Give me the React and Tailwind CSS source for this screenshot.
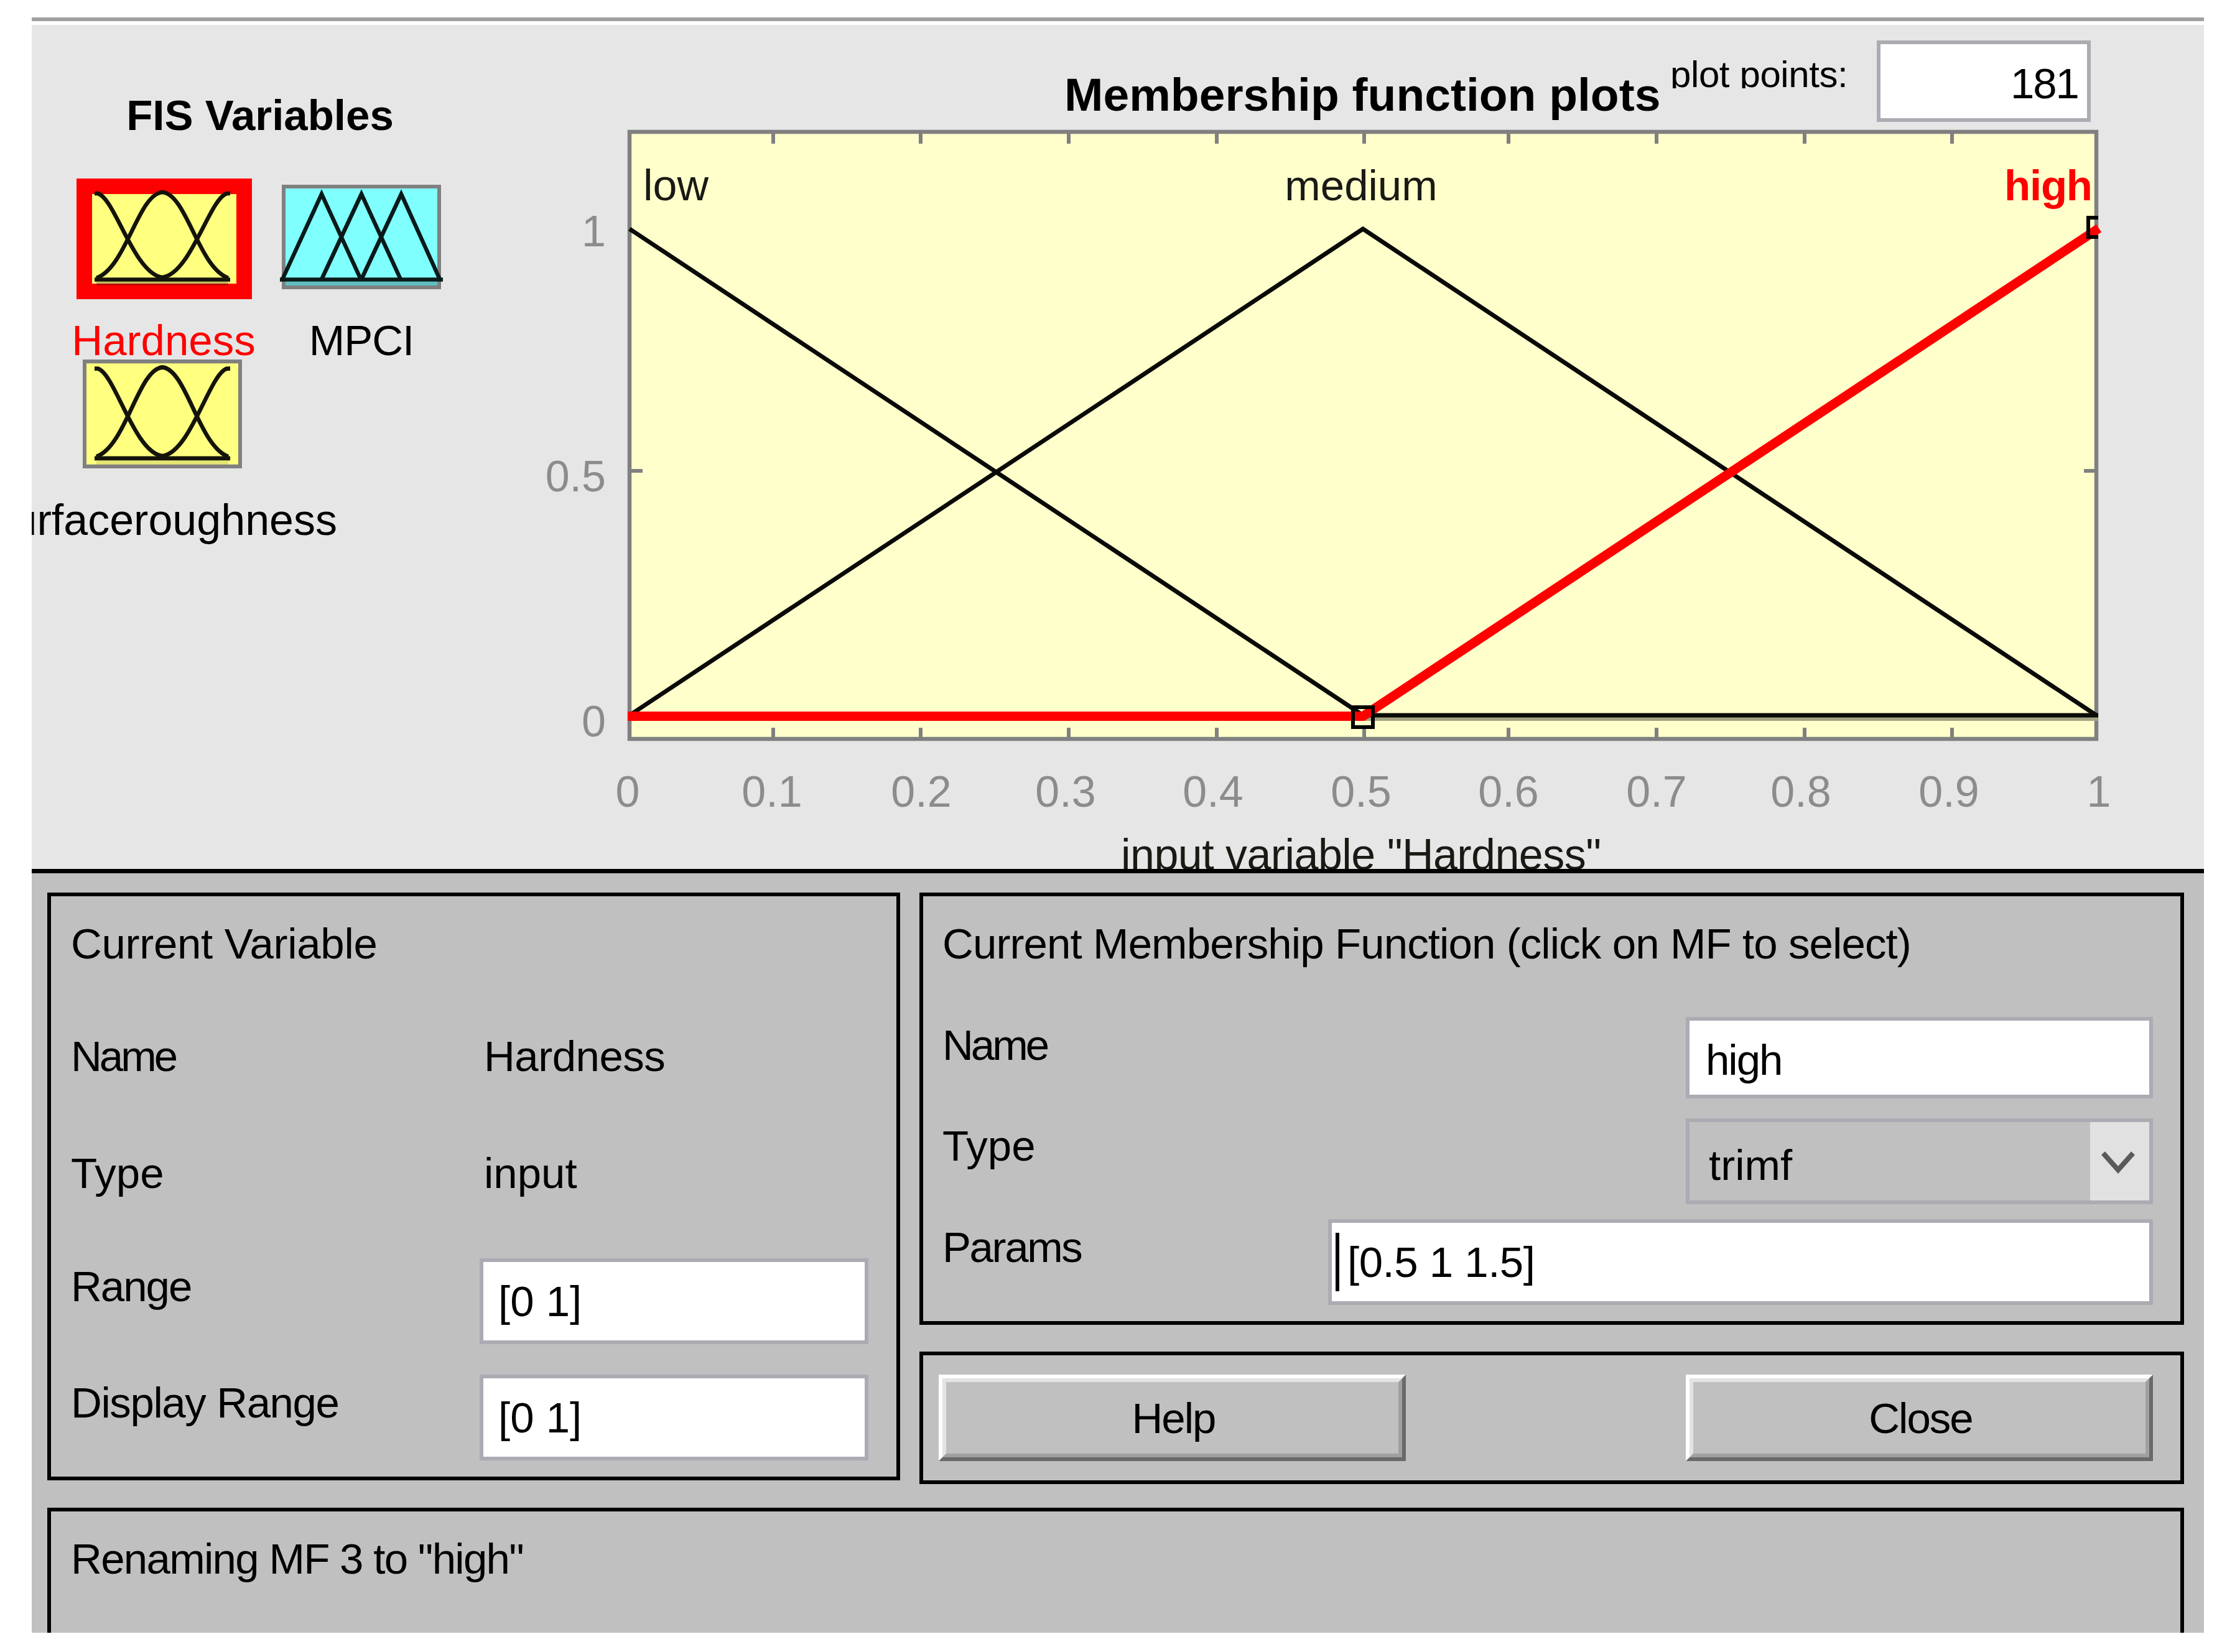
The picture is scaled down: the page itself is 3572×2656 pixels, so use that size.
const X_TICKS = [
  { label: "0", x: 1009 },
  { label: "0.1", x: 1241, tick: 1243 },
  { label: "0.2", x: 1481, tick: 1480 },
  { label: "0.3", x: 1713, tick: 1718 },
  { label: "0.4", x: 1950, tick: 1956 },
  { label: "0.5", x: 2188, tick: 2193 },
  { label: "0.6", x: 2425, tick: 2425 },
  { label: "0.7", x: 2663, tick: 2663 },
  { label: "0.8", x: 2895, tick: 2901 },
  { label: "0.9", x: 3133, tick: 3138 },
  { label: "1", x: 3374 },
];

const Y_TICKS = [
  { label: "1", y: 396 },
  { label: "0.5", y: 790 },
  { label: "0", y: 1184 },
];

/**
 * Thumbnail of an input variable (three bell curves).
 */
function InputIcon({ selected, className }) {
  return (
    <svg
      viewBox="0 0 256 168"
      preserveAspectRatio="none"
      className={`w-[256px] overflow-visible ${className}`}
    >
      <rect x="3" y="3" width="250" height="162" fill="#ffff80" stroke="#808080" strokeWidth="6" />
      {selected && (
        <rect x="2.5" y="2.5" width="257" height="169" fill="none" stroke="#ff0000" strokeWidth="25" />
      )}
      <rect
        x="22"
        y="156"
        width="212"
        height="6"
        fill="#000000"
        opacity={selected ? 0.25 : 0.1}
      />
      <g fill="none" stroke="#14140a" strokeWidth="6.5">
        <path d="M19 14 H24 C52 21 82 143 128 149" />
        <path d="M22 150 C70 133 89 15 128 12 C167 15 186 133 234 150" />
        <path d="M237 14 H232 C204 21 174 143 128 149" />
        <path d="M19 152.500 H237" />
      </g>
    </svg>
  );
}

/**
 * Thumbnail of an output variable (three triangles).
 */
function OutputIcon() {
  return (
    <svg viewBox="0 0 256 168" className="h-[168px] w-[256px] overflow-visible">
      <rect x="3" y="3" width="250" height="162" fill="#80ffff" stroke="#808080" strokeWidth="6" />
      <rect x="6" y="156" width="244" height="6" fill="#5fbfc2" />
      <g fill="none" stroke="#0a1a1a" strokeWidth="6.500">
        <path d="M1 152 L64 15 L127 152" />
        <path d="M64 152 L128 15 L191 152" />
        <path d="M128 152 L192 15 L254 152" />
        <path d="M-3 152.500 H259" />
      </g>
    </svg>
  );
}

function FisVariables() {
  return (
    <div className="w-[800px] shrink-0 overflow-hidden pt-[106px]">
      <h2 className="w-[734px] text-center text-[69px] leading-[80px] font-bold">FIS Variables</h2>

      <div className="mt-[71px] ml-[50px] flex">
        <div className="flex w-[320px] flex-col items-center">
          <InputIcon selected className="h-[168px]" />
          <p className="mt-[53px] ml-[4px] text-[69px] leading-[60px] text-[#ff0000]">Hardness</p>
        </div>
        <div className="flex w-[320px] flex-col items-center">
          <OutputIcon />
          <p className="mt-[53px] text-[69px] leading-[60px] tracking-[-1px]">MPCI</p>
        </div>
      </div>

      <div className="ml-[82px]">
        <InputIcon className="h-[175px]" />
      </div>
      <div className="mt-[53px] flex w-[491px] justify-end">
        <p className="text-[70px] leading-[60px]">urfaceroughness</p>
      </div>
    </div>
  );
}

function MembershipPlot() {
  return (
    <svg
      viewBox="851 200 2692 1197"
      className="block h-[1197px] w-[2692px]"
      fontFamily='"Liberation Sans", Arial, sans-serif'
      fontSize="70"
    >
      <rect x="1012" y="212" width="2358" height="976" fill="#ffffcc" stroke="#808080" strokeWidth="6.500" />

      <g stroke="#808080" strokeWidth="6">
        {X_TICKS.filter((t) => t.tick).map((t) => (
          <path key={t.label} d={`M${t.tick} 214 V231 M${t.tick} 1170 V1186`} />
        ))}
        <path d="M1014 757 H1033 M3350 757 H3368" />
      </g>

      <g fill="#8c8c8c">
        {X_TICKS.map((t) => (
          <text key={t.label} x={t.x} y="1297" textAnchor="middle">
            {t.label}
          </text>
        ))}
        {Y_TICKS.map((t) => (
          <text key={t.label} x="974" y={t.y} textAnchor="end">
            {t.label}
          </text>
        ))}
      </g>

      {/* low, medium */}
      <g fill="none" stroke="#0a0a08" strokeWidth="7">
        <path d="M2191 1156 H3373" stroke="#a3a383" strokeWidth="6" />
        <path d="M1012 368 L2191 1150 H3373" />
        <path d="M1012 1150 L2191 368 L3370 1150" />
      </g>

      {/* high is the selected one */}
      <path d="M1009 1151.500 H2191 L3374 367" fill="none" stroke="#ff0000" strokeWidth="15" />
      <rect x="2175" y="1137" width="32" height="32" fill="none" stroke="#000000" strokeWidth="6" />
      <path d="M3373 350 H3357 V381 H3373" fill="none" stroke="#000000" strokeWidth="6" />

      <g fill="#1a1a14">
        <text x="1034" y="322">low</text>
        <text x="2188" y="322" textAnchor="middle" fontSize="69">medium</text>
        <text x="3222" y="322" fontWeight="bold" fontSize="69" fill="#ff0000" textLength="142">
          high
        </text>
        <text x="1802" y="1398" textLength="772">input variable "Hardness"</text>
      </g>
    </svg>
  );
}

function Panel({ className, children }) {
  return <section className={`border-[6px] border-black ${className}`}>{children}</section>;
}

function Field({ className, children }) {
  return (
    <div className={`flex items-center border-[6px] border-[#ababb3] bg-white whitespace-pre ${className}`}>
      {children}
    </div>
  );
}

function PushButton({ children }) {
  return (
    <button
      type="button"
      className="h-[139px] w-[751px] border-[6px] border-t-white border-r-[#696969] border-b-[#696969] border-l-white"
    >
      <span className="flex h-full items-center justify-center border-[6px] border-t-[#e3e3e3] border-r-[#a0a0a0] border-b-[#a0a0a0] border-l-[#e3e3e3] pt-[2px] pl-[4px] tracking-[-2px]">
        {children}
      </span>
    </button>
  );
}

function CurrentVariable() {
  return (
    <Panel className="h-[945px] w-[1371px] pt-[37px] pl-[32px]">
      <h3 className="tracking-[-0.3px]">Current Variable</h3>
      <div className="mt-[101px] flex">
        <span className="w-[664px] tracking-[-4px]">Name</span>
        <span className="tracking-[-0.5px]">Hardness</span>
      </div>
      <div className="mt-[108px] flex">
        <span className="w-[664px]">Type</span>
        <span>input</span>
      </div>
      <div className="mt-[96px] flex">
        <span className="mt-[6px] w-[657px] tracking-[-2px]">Range</span>
        <Field className="h-[138px] w-[625px] pt-[2px] pl-[24px]">[0 1]</Field>
      </div>
      <div className="mt-[49px] flex">
        <span className="mt-[6px] w-[657px] tracking-[-1.4px]">Display Range</span>
        <Field className="h-[138px] w-[625px] pt-[2px] pl-[24px]">[0 1]</Field>
      </div>
    </Panel>
  );
}

function CurrentMembershipFunction() {
  return (
    <Panel className="h-[695px] pt-[37px] pr-[44px] pl-[31px]">
      <h3 className="tracking-[-0.9px] whitespace-nowrap">
        Current Membership Function (click on MF to select)
      </h3>
      <div className="mt-[77px] flex justify-between">
        <span className="mt-[6px] tracking-[-4px]">Name</span>
        <Field className="h-[131px] w-[751px] pt-[9px] pl-[26px] tracking-[-2px]">high</Field>
      </div>
      <div className="mt-[32px] flex justify-between">
        <span className="mt-[5px]">Type</span>
        <div className="flex h-[138px] w-[751px] justify-between border-[6px] border-[#ababb3]">
          <span className="mt-[30px] ml-[31px]">trimf</span>
          <span className="flex w-[95px] items-center justify-center bg-[#e1e1e1] pt-[4px] pr-[6px]">
            <svg viewBox="0 0 56 36" className="h-[36px] w-[56px]">
              <path d="M4 3 L28 30 L52 3" fill="none" stroke="#5a5a5a" strokeWidth="8" />
            </svg>
          </span>
        </div>
      </div>
      <div className="mt-[24px] flex justify-between">
        <span className="mt-[6px] tracking-[-2.4px]">Params</span>
        <Field className="h-[138px] w-[1326px] pl-[6px] tracking-[-0.5px]">
          <span className="mr-[13px] h-[94px] w-[6px] bg-black" />
          <span className="pt-[2px]">[0.5 1 1.5]</span>
        </Field>
      </div>
    </Panel>
  );
}

export default function App() {
  return (
    <div className="h-[2656px] w-[3572px] overflow-hidden bg-white pt-[28px] pr-[29px] pl-[51px] font-['Liberation_Sans',Arial,sans-serif] text-black">
      <div className="h-[6px] bg-[#a0a0a0]" />

      <div className="mt-[6px] flex h-[1357px] overflow-hidden bg-[#e6e6e6]">
        <FisVariables />
        <div className="w-[2692px] shrink-0">
          <div className="flex h-[160px] items-start">
            <h1 className="mt-[67px] ml-[860px] w-[974px] text-[75px] leading-[90px] font-bold whitespace-nowrap">
              Membership function plots
            </h1>
            <span className="mt-[47px] h-[55px] w-[332px] overflow-hidden text-[60px] leading-[66px] tracking-[-0.4px]">
              plot points:
            </span>
            <Field className="mt-[25px] h-[131px] w-[344px] justify-end pt-[9px] pr-[14px] text-[69px] tracking-[-2px]">
              181
            </Field>
          </div>
          <MembershipPlot />
        </div>
      </div>

      <div className="h-[1228px] overflow-hidden border-t-[7px] border-black bg-[#c0c0c0] pt-[31px] pr-[32px] pl-[25px] text-[69px] leading-[80px]">
        <div className="flex h-[951px] gap-[31px]">
          <CurrentVariable />
          <div className="flex w-[2033px] flex-col gap-[43px]">
            <CurrentMembershipFunction />
            <Panel className="flex h-[213px] justify-between pt-[31px] pr-[44px] pl-[25px]">
              <PushButton>Help</PushButton>
              <PushButton>Close</PushButton>
            </Panel>
          </div>
        </div>

        <Panel className="mt-[38px] h-[201px] border-b-0 pt-[37px] pl-[32px]">
          <p className="tracking-[-1.7px]">Renaming MF 3 to "high"</p>
        </Panel>
      </div>
    </div>
  );
}
